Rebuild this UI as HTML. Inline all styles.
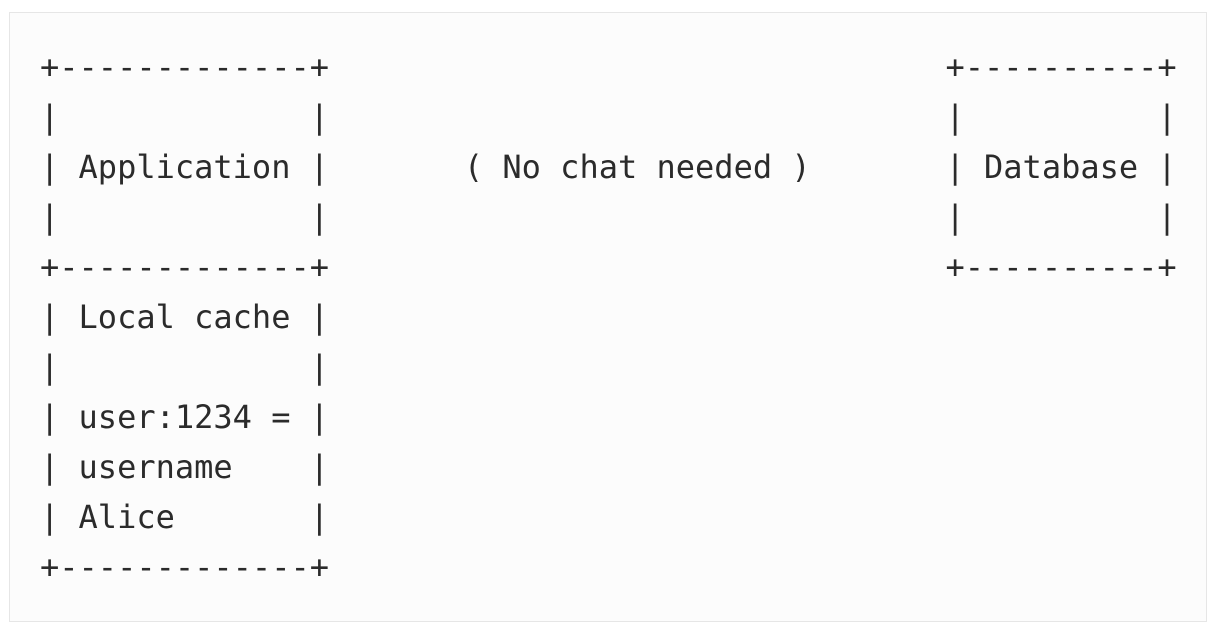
<!DOCTYPE html>
<html><head><meta charset="utf-8"><style>
html,body{margin:0;padding:0;background:#fff;width:1214px;height:636px;overflow:hidden}
.box{position:absolute;left:9px;top:12px;width:1198px;height:610px;border:1px solid #e6e6e6;background:#fcfcfc;box-sizing:border-box}
pre{position:absolute;left:40px;top:42px;margin:0;font-family:"DejaVu Sans Mono","Liberation Mono",monospace;font-size:32px;line-height:50px;color:#2b2b2b}
</style></head><body>
<div class="box"></div>
<pre>+-------------+                                +----------+
|             |                                |          |
| Application |       ( No chat needed )       | Database |
|             |                                |          |
+-------------+                                +----------+
| Local cache |
|             |
| user:1234 = |
| username    |
| Alice       |
+-------------+</pre>
</body></html>
